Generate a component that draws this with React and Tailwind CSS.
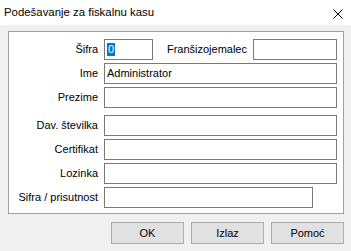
import React from 'react';

const Field = ({ className = 'flex-1', children }) => (
  <div className={`h-[21px] border border-[#7a7a7a] bg-white pl-[2px] flex items-center ${className}`}>
    {children}
  </div>
);

const Row = ({ label, fieldClass, children }) => (
  <div className="flex items-center h-[21px]">
    <div className="w-[89px] text-right whitespace-nowrap">{label}</div>
    <div className="ml-[6px] flex flex-1 items-center">
      <Field className={fieldClass}>{children}</Field>
    </div>
  </div>
);

export default function App() {
  return (
    <div
      className="w-[351px] h-[251px] bg-[#f0f0f0] text-black text-[11px] flex flex-col overflow-hidden"
      style={{ fontFamily: '"Liberation Sans", Arial, sans-serif' }}
    >
      {/* Title bar */}
      <div className="h-[25px] bg-white flex items-center pl-[4px] pr-[8px]">
        <span className="text-[11.4px] flex-1 mt-[1px]">Podešavanje za fiskalnu kasu</span>
        <svg width="10" height="10" viewBox="0 0 10 10" className="mt-[3px]">
          <path d="M0.5 0.5L9.5 9.5M9.5 0.5L0.5 9.5" stroke="#000" strokeWidth="1" />
        </svg>
      </div>

      {/* Group box */}
      <div className="mt-[6px] ml-[8px] w-[336px] h-[183px] border border-[#a0a0a0] bg-white pt-[7px] pr-[6px] flex flex-col">
        <div className="flex items-center h-[21px]">
          <div className="w-[89px] text-right">Šifra</div>
          <div className="ml-[6px] w-[49px]">
            <Field className="w-[49px]">
              <span className="bg-[#0078d7] text-white leading-[13px] px-[1px]">0</span>
            </Field>
          </div>
          <div className="flex-1" />
          <div className="whitespace-nowrap">Franšizojemalec</div>
          <div className="ml-[6px]">
            <Field className="w-[84px]" />
          </div>
        </div>
        <div className="mt-[3px]">
          <Row label="Ime">Administrator</Row>
        </div>
        <div className="mt-[3px]">
          <Row label="Prezime" />
        </div>
        <div className="mt-[7px]">
          <Row label="Dav. številka" />
        </div>
        <div className="mt-[3px]">
          <Row label="Certifikat" />
        </div>
        <div className="mt-[3px]">
          <Row label="Lozinka" />
        </div>
        <div className="mt-[3px] flex items-center h-[21px]">
          <div className="w-[89px] text-right whitespace-nowrap">Sifra / prisutnost</div>
          <div className="ml-[6px]">
            <Field className="w-[209px]" />
          </div>
        </div>
      </div>

      {/* Buttons */}
      <div className="mt-[8px] ml-[111px] flex gap-[7px]">
        {['OK', 'Izlaz', 'Pomoć'].map((b) => (
          <button
            key={b}
            className="w-[73px] h-[22px] bg-[#e1e1e1] border border-[#adadad] flex items-center justify-center"
          >
            {b}
          </button>
        ))}
      </div>
    </div>
  );
}
